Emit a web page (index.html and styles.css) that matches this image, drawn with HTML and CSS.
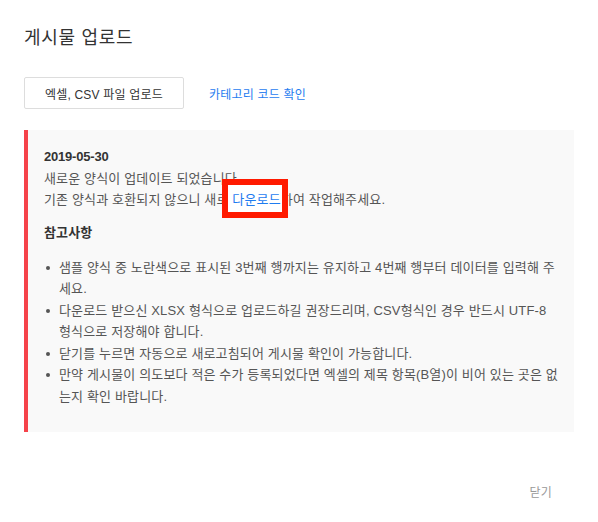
FILE: index.html
```html
<!DOCTYPE html>
<html lang="ko">
<head>
<meta charset="utf-8">
<title>게시물 업로드</title>
<link rel="stylesheet" href="styles.css">
</head>
<body>
<div class="dialog">
  <h1 class="title">게시물 업로드</h1>
  <div class="actions">
    <button class="upload-btn" type="button">엑셀, CSV 파일 업로드</button>
    <a class="cat-link" href="#">카테고리 코드 확인</a>
  </div>
  <div class="notice">
    <p class="date">2019-05-30</p>
    <p>새로운 양식이 업데이트 되었습니다.</p>
    <p>기존 양식과 호환되지 않으니 새로 <a class="dl-link" href="#">다운로드</a>하여 작업해주세요.</p>
    <h2 class="notes-title">참고사항</h2>
    <ul class="notes">
      <li>샘플 양식 중 노란색으로 표시된 3번째 행까지는 유지하고 4번째 행부터 데이터를 입력해 주세요.</li>
      <li>다운로드 받으신 XLSX 형식으로 업로드하길 권장드리며, CSV형식인 경우 반드시 UTF-8 형식으로 저장해야 합니다.</li>
      <li>닫기를 누르면 자동으로 새로고침되어 게시물 확인이 가능합니다.</li>
      <li>만약 게시물이 의도보다 적은 수가 등록되었다면 엑셀의 제목 항목(B열)이 비어 있는 곳은 없는지 확인 바랍니다.</li>
    </ul>
  </div>
  <div class="footer">
    <button class="close-btn" type="button">닫기</button>
  </div>
</div>
</body>
</html>
```

FILE: styles.css
```css
* { box-sizing: border-box; }

html, body {
  margin: 0;
  background: #fff;
}

body {
  font-family: "Liberation Sans", "Noto Sans CJK KR", sans-serif;
  color: #555;
}

.dialog {
  width: 598px;
  padding: 25px 24px 0;
}

.title {
  margin: 0;
  font-size: 18px;
  line-height: 26px;
  font-weight: 400;
  color: #333;
  letter-spacing: 0.7px;
}

.actions {
  margin-top: 26px;
  display: flex;
  align-items: center;
  gap: 25px;
}

.upload-btn {
  width: 160px;
  height: 32px;
  padding: 0;
  border: 1px solid #ddd;
  border-radius: 2px;
  background: #fff;
  font-family: inherit;
  font-size: 12px;
  letter-spacing: 0.2px;
  color: #333;
}

.cat-link {
  font-size: 12px;
  letter-spacing: 0.2px;
  color: #1f7cf0;
  text-decoration: none;
}

.notice {
  margin-top: 21px;
  background: #f9f9f9;
  border-left: 4px solid #f5424a;
  padding: 16px 16px 25px;
  font-size: 13px;
  line-height: 21.5px;
  letter-spacing: 0.15px;
}

.notice p { margin: 0; }

.date {
  font-weight: 700;
  color: #333;
  letter-spacing: -0.2px;
}

.dl-link {
  position: relative;
  z-index: 0;
  display: inline-block;
  color: #1f7cf0;
  text-decoration: none;
}

.dl-link::before {
  content: "";
  position: absolute;
  z-index: -1;
  left: -10px;
  right: -7px;
  top: -10px;
  bottom: -7.5px;
  border: 6px solid #ff1a00;
  background: #fff;
}

.notes-title {
  margin: 11px 0 0;
  font-size: 13px;
  line-height: 21.5px;
  font-weight: 700;
  color: #333;
}

.notes {
  margin: 13.5px 0 0;
  padding: 0 0 0 15px;
  list-style: none;
}

.notes li {
  position: relative;
}

.notes li::before {
  content: "";
  position: absolute;
  left: -13px;
  top: 9px;
  width: 4px;
  height: 4px;
  border-radius: 50%;
  background: #555;
}

.footer {
  margin-top: 51px;
  display: flex;
  justify-content: flex-end;
}

.close-btn {
  padding: 0 22px;
  border: 0;
  background: none;
  font-family: inherit;
  font-size: 12px;
  line-height: 20px;
  letter-spacing: 0.2px;
  color: #999;
}
```
